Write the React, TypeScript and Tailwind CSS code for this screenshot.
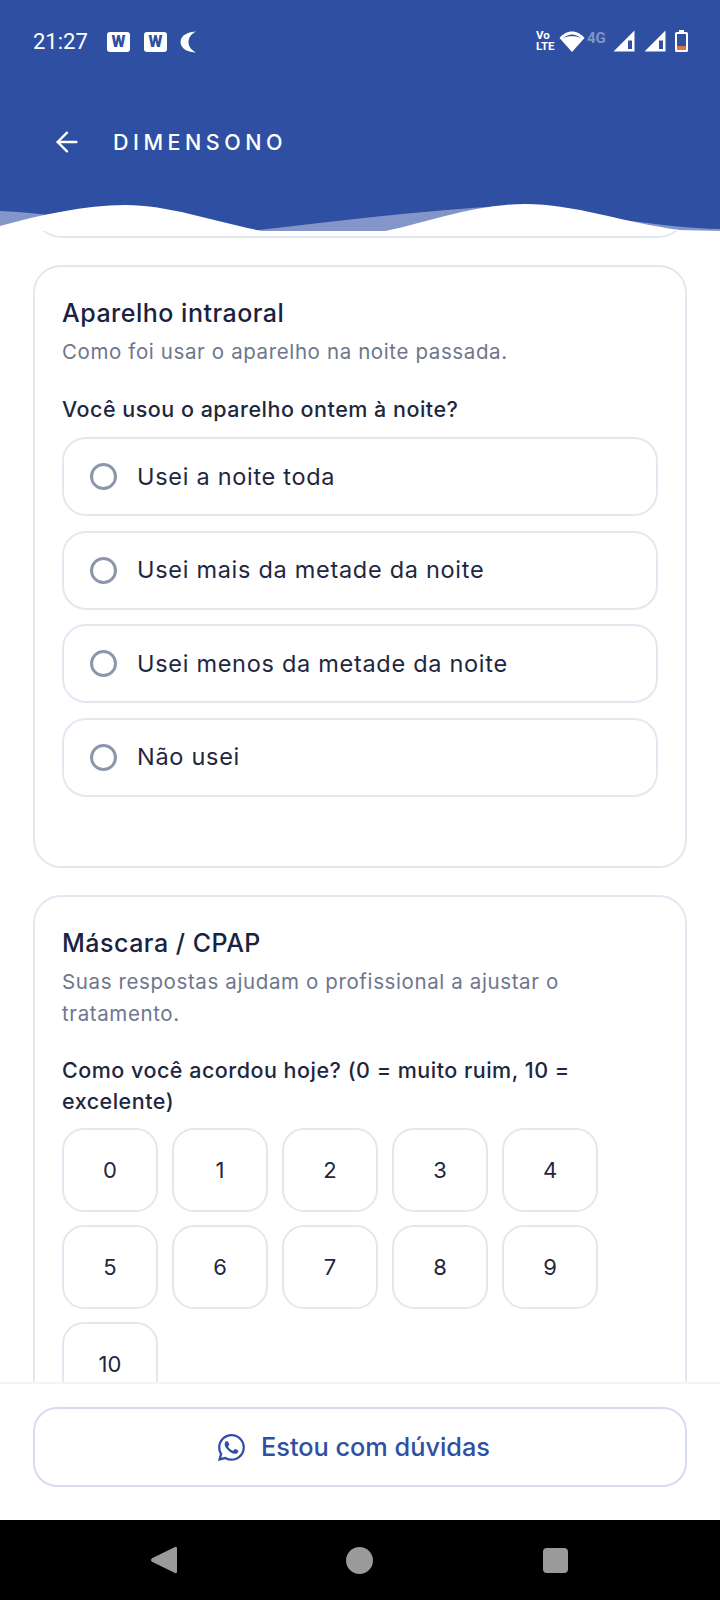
import { ArrowLeft } from "lucide-react";
import { BsWhatsapp } from "react-icons/bs";

const OPTIONS = [
  "Usei a noite toda",
  "Usei mais da metade da noite",
  "Usei menos da metade da noite",
  "Não usei",
];

const SCORES = [0, 1, 2, 3, 4, 5, 6, 7, 8, 9, 10];

function AppBadge() {
  return (
    <span className="flex h-[20px] w-[23px] items-center justify-center rounded-[3px] bg-white font-['Roboto',sans-serif] text-[16px] font-black leading-none text-[#2f4fa2]">
      W
    </span>
  );
}

function SignalIcon() {
  return (
    <svg width="22" height="22" viewBox="0 0 22 22">
      <path d="M21.5 0.5V21.5H0.5Z" fill="#fff" />
      <path d="M15 10.5H19V19H15Z" fill="#2f4fa2" />
    </svg>
  );
}

function StatusBar() {
  return (
    <div className="flex h-[84px] items-start justify-between pl-[33px] pr-[32px] pt-[30px] text-white">
      <div className="flex items-center">
        <span className="w-[54px] font-['Roboto',sans-serif] text-[22px] leading-[24px]">21:27</span>
        <div className="ml-[20px] flex items-center gap-[14px]">
          <AppBadge />
          <AppBadge />
        </div>
        <svg className="ml-[13px]" width="17" height="22" viewBox="0 0 17 22">
          <path d="M16 0.5C9 0.5 0.5 4 0.5 11S9 21.5 16 21.5C11 19 8.5 15 8.5 11S11 3 16 0.5Z" fill="#fff" />
        </svg>
      </div>
      <div className="flex items-center">
        <div className="flex w-[20px] flex-col font-['Roboto',sans-serif] text-[11.5px] font-bold leading-[11px]">
          <span>Vo</span>
          <span>LTE</span>
        </div>
        <svg className="ml-[3px]" width="26" height="21" viewBox="0 0 26 21">
          <path d="M13 21L0.5 7C4 3 8 0.5 13 0.5S22 3 25.5 7Z" fill="#fff" />
          <path d="M4.2 7C7 4.6 9.8 3.4 13 3.4S19 4.6 21.8 7C19 5.6 16 5.2 13 5.2S7 5.6 4.2 7Z" fill="#2f4fa2" />
        </svg>
        <span className="ml-[2px] -mt-[6px] w-[22px] font-['Roboto',sans-serif] text-[15px] font-bold leading-none text-[#7f93c6]">4G</span>
        <div className="ml-[4px] flex items-center gap-[9px]">
          <SignalIcon />
          <SignalIcon />
        </div>
        <svg className="ml-[9px]" width="13" height="22" viewBox="0 0 13 22">
          <path d="M4 0H9V2H11.5Q13 2 13 3.5V20.5Q13 22 11.5 22H1.5Q0 22 0 20.5V3.5Q0 2 1.5 2H4Z" fill="#fff" />
          <rect x="2" y="4" width="9" height="12" fill="#2f4fa2" />
          <rect x="2" y="16" width="9" height="4" fill="#e8703a" />
        </svg>
      </div>
    </div>
  );
}

function Header() {
  return (
    <header className="relative z-10 h-[231px] bg-[#2f4fa2]">
      <StatusBar />
      <div className="flex items-center pl-[51px] pt-[42px] text-white">
        <ArrowLeft size={32} strokeWidth={1.8} />
        <span className="ml-[30px] font-['Inter',sans-serif] text-[21.5px] font-medium leading-[28px] tracking-[0.21em]">
          DIMENSONO
        </span>
      </div>
      <svg className="absolute bottom-0 left-0" width="720" height="32" viewBox="0 199 720 32">
        <path d="M0 211C25 212 45 214 70 219L120 231H0Z" fill="#8496c9" />
        <path d="M250 231C330 222 420 210 520 205C600 215 660 228 720 229V231Z" fill="#8496c9" />
        <path d="M0 226C40 215 85 205 125 205C170 205 215 222 262 231H0Z" fill="#fff" />
        <path d="M385 231C430 222 475 204 525 204C575 204 620 222 680 230L720 231Z" fill="#fff" />
      </svg>
    </header>
  );
}

function CardTitle({ title, subtitle }: { title: string; subtitle: string }) {
  return (
    <>
      <h2 className="text-[25px] font-medium leading-[32px] tracking-[0.02em] text-[#1a2240]">{title}</h2>
      <p className="mt-[7px] text-[20.5px] leading-[32px] tracking-[0.03em] text-[#6f768c]">{subtitle}</p>
    </>
  );
}

function ApplianceCard() {
  return (
    <section className="h-[603px] rounded-[28px] border-2 border-[#e2e8f0] bg-white px-[27px] pt-[30px]">
      <CardTitle title="Aparelho intraoral" subtitle="Como foi usar o aparelho na noite passada." />
      <p className="mt-[26px] text-[21.5px] font-medium leading-[30px] tracking-[0.023em] text-[#1f2740]">
        Você usou o aparelho ontem à noite?
      </p>
      <div className="mt-[13px] flex flex-col gap-[14.5px]">
        {OPTIONS.map((option) => (
          <div
            key={option}
            className="flex h-[79px] items-center rounded-[24px] border-2 border-[#e2e8f0] pl-[26px]"
          >
            <span className="h-[27px] w-[27px] rounded-full border-[3px] border-[#8d96ab]" />
            <span className="ml-[20px] text-[23.5px] leading-[32px] tracking-[0.03em] text-[#1f2740]">{option}</span>
          </div>
        ))}
      </div>
    </section>
  );
}

function CpapCard() {
  return (
    <section className="mt-[27px] rounded-[28px] border-2 border-[#e2e8f0] bg-white px-[27px] pt-[30px]">
      <CardTitle
        title="Máscara / CPAP"
        subtitle="Suas respostas ajudam o profissional a ajustar o tratamento."
      />
      <p className="mt-[25px] text-[21.5px] font-medium leading-[31px] tracking-[0.023em] text-[#1f2740]">
        Como você acordou hoje? (0 = muito ruim, 10 = excelente)
      </p>
      <div className="mt-[11px] flex flex-wrap gap-x-[14px] gap-y-[13px] pb-[40px]">
        {SCORES.map((score) => (
          <div
            key={score}
            className="flex h-[84px] w-[96px] items-center justify-center rounded-[22px] border-2 border-[#e2e8f0] text-[22px] font-normal text-[#1f2740]"
          >
            {score}
          </div>
        ))}
      </div>
    </section>
  );
}

function Footer() {
  return (
    <footer className="h-[138px] border-t-2 border-[#f2f4f8] bg-white px-[33px] pt-[23px]">
      <button
        type="button"
        className="flex h-[80px] w-full items-center justify-center gap-[16px] rounded-[24px] border-2 border-[#d5dcee] pr-[12px] text-[25.3px] font-medium text-[#2f4fa2]"
      >
        <BsWhatsapp size={27} />
        Estou com dúvidas
      </button>
    </footer>
  );
}

function NavBar() {
  return (
    <nav className="flex h-[80px] items-center bg-black pl-[150px]">
      <svg width="28" height="28" viewBox="0 0 28 30" preserveAspectRatio="none">
        <path d="M25 1Q27 0 27 3V27Q27 30 25 29L2 17Q0 15 2 13Z" fill="#9a9a9a" />
      </svg>
      <span className="ml-[168px] h-[27px] w-[27px] rounded-full bg-[#9a9a9a]" />
      <span className="ml-[170px] h-[25px] w-[25px] rounded-[4px] bg-[#9a9a9a]" />
    </nav>
  );
}

export default function App() {
  return (
    <div className="flex h-[1600px] w-[720px] flex-col overflow-hidden bg-white font-['Inter',sans-serif]">
      <Header />
      <main className="min-h-0 flex-1 overflow-hidden px-[33px]">
        <div className="-mt-[53px] h-[60px] rounded-b-[28px] border-2 border-t-0 border-[#e2e8f0]" />
        <div className="mt-[27px]">
          <ApplianceCard />
          <CpapCard />
        </div>
      </main>
      <Footer />
      <NavBar />
    </div>
  );
}
